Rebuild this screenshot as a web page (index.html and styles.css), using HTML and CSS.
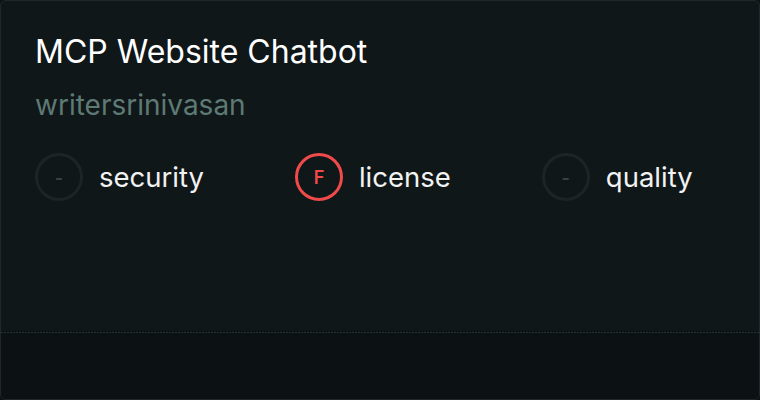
FILE: index.html
```html
<!DOCTYPE html>
<html>
<head>
<meta charset="utf-8">
<link rel="stylesheet" href="styles.css">
</head>
<body>
<div class="card">
  <div class="main">
    <h1 class="title">MCP Website Chatbot</h1>
    <div class="author">writersrinivasan</div>
    <div class="scores">
      <div class="score">
        <span class="ring ring-none">-</span>
        <span class="label">security</span>
      </div>
      <div class="score">
        <span class="ring ring-fail">F</span>
        <span class="label">license</span>
      </div>
      <div class="score">
        <span class="ring ring-none">-</span>
        <span class="label">quality</span>
      </div>
    </div>
  </div>
  <div class="footer"></div>
</div>
</body>
</html>
```
FILE: styles.css
```css
html, body {
  margin: 0;
  padding: 0;
  background: #0d1214;
}
.card {
  box-sizing: border-box;
  width: 760px;
  height: 400px;
  border: 1px solid #20282b;
  border-radius: 6px;
  background: #101719;
  display: flex;
  flex-direction: column;
  overflow: hidden;
  font-family: Inter, "Noto Sans", sans-serif;
}
.main {
  flex: 1;
  padding: 31px 33px 0 34px;
}
.title {
  margin: 0;
  font-size: 32px;
  font-weight: 400;
  line-height: 40px;
  color: #ffffff;
}
.author {
  margin-top: 16px;
  font-size: 28px;
  line-height: 34px;
  color: #5e7a74;
}
.scores {
  display: flex;
  align-items: center;
  gap: 91px;
  margin-top: 31px;
}
.score {
  display: flex;
  align-items: center;
  gap: 16px;
}
.ring {
  box-sizing: border-box;
  width: 48px;
  height: 48px;
  border-radius: 50%;
  display: flex;
  align-items: center;
  justify-content: center;
  font-size: 18px;
  font-weight: 600;
}
.ring-none {
  border: 3px solid #1e2426;
  color: #3c4244;
}
.ring-fail {
  border: 3px solid #f04a4a;
  color: #f04a4a;
}
.label {
  font-size: 27.5px;
  line-height: 34px;
  color: #f2f2f2;
}
.footer {
  height: 67px;
  border-top: 1px solid transparent;
  background-image: repeating-linear-gradient(90deg, #2a3033 0 2px, transparent 2px 3px);
  background-size: 100% 1px;
  background-repeat: no-repeat;
  background-position: top left;
  background-color: #0c1114;
}
```
